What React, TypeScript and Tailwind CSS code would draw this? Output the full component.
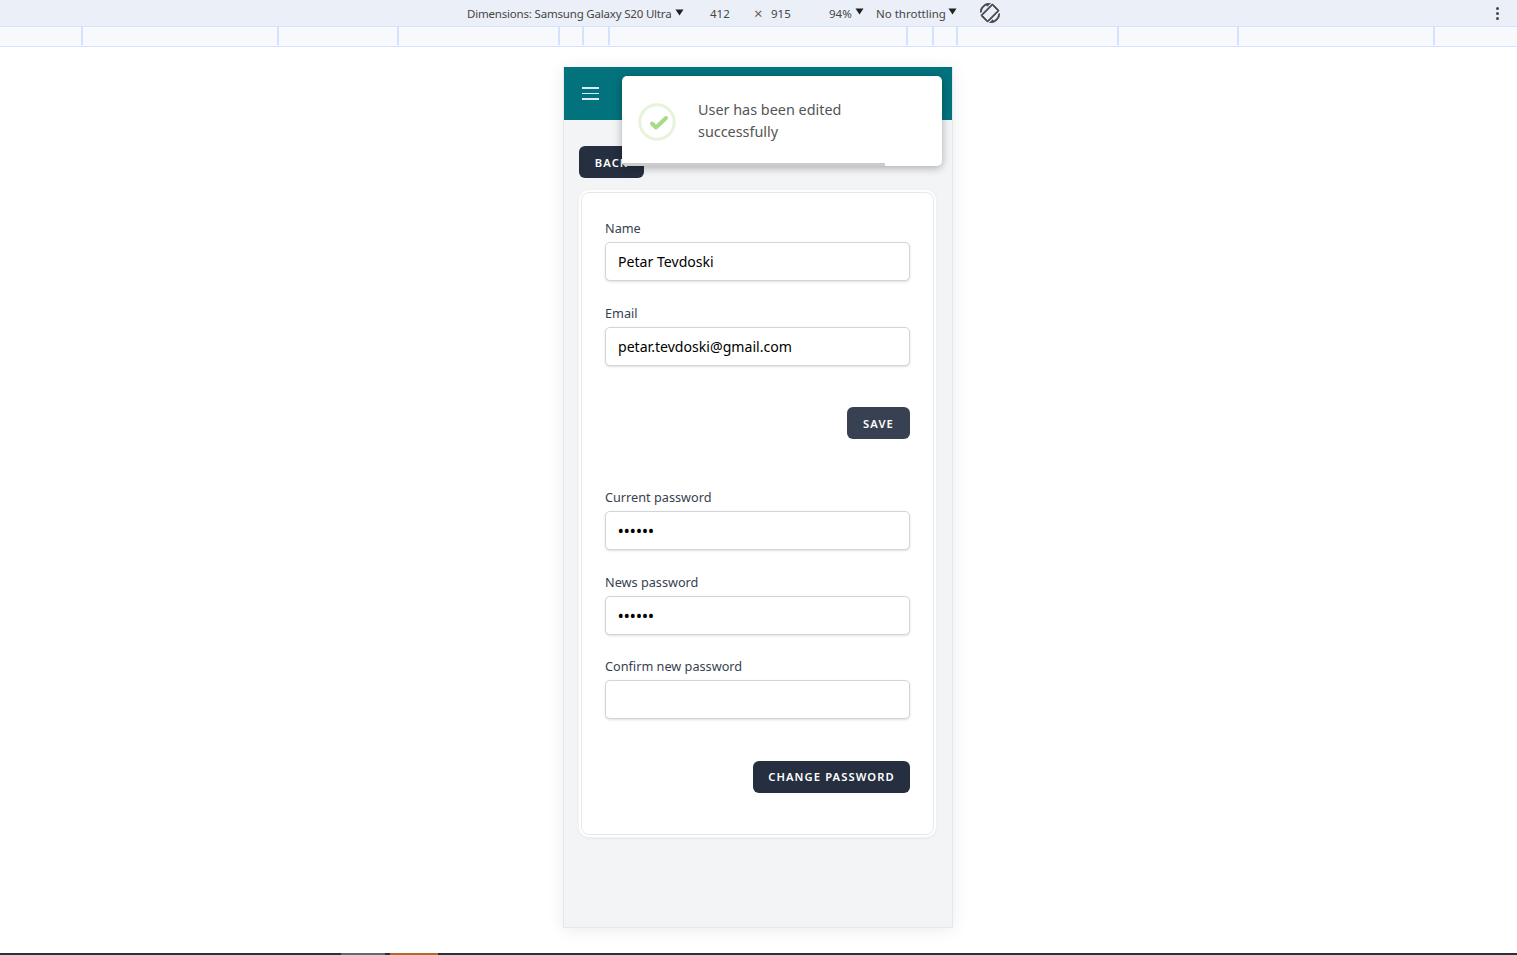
const ticks = [81, 277, 397, 558, 582, 608, 906, 932, 956, 1117, 1237, 1433];

function Field({ label, value, mono, labelClass }: { label: string; value?: string; mono?: boolean; labelClass: string }) {
  return (
    <div className={labelClass}>
      <div className="text-[12.7px] leading-[20px] text-[#374151] font-['Noto_Sans',sans-serif]">{label}</div>
      <div className="mt-[4px] h-[39px] rounded-[5px] border border-[#d1d5db] bg-white shadow-sm flex items-center px-[12px] text-[14.1px] text-black font-['Noto_Sans',sans-serif]">
        {mono ? <span className="tracking-[0.6px] text-[14.5px] font-semibold">••••••</span> : value}
      </div>
    </div>
  );
}

function Btn({ children, light, className = "" }: { children: string; light?: boolean; className?: string }) {
  return (
    <div className={`h-[32px] rounded-[6px] flex items-center justify-center text-white text-[11.2px] font-semibold tracking-[1.1px] font-['Noto_Sans',sans-serif] ${light ? "bg-[#374151]" : "bg-[#252f3f]"} ${className}`}>
      {children}
    </div>
  );
}

function Caret() {
  return (
    <svg width="9" height="7" viewBox="0 0 9 7" className="inline-block shrink-0 mb-[3px]">
      <path d="M0.5 0.5h8L4.5 6.5z" fill="#202124" />
    </svg>
  );
}

export default function App() {
  return (
    <div className="h-[955px] w-[1517px] overflow-hidden bg-white flex flex-col font-['Noto_Sans',sans-serif]">
      <div className="h-[27px] shrink-0 bg-[#ebeff7] border-b border-[#d3e3fd] flex items-center text-[11.5px] text-[#444746]">
        <div className="ml-[467px] w-[217px] flex items-center gap-[4px] whitespace-nowrap pt-[1px]">
          <span className="tracking-[-0.19px]">Dimensions: Samsung Galaxy S20 Ultra</span>
          <Caret />
        </div>
        <span className="ml-[26px] w-[44px] pt-[1px]">412</span>
        <span className="w-[17px] text-[#6b5f5a] text-[15px] pt-[1px]">×</span>
        <span className="w-[58px] pt-[1px]">915</span>
        <span className="w-[26px] pt-[1px]">94%</span>
        <Caret />
        <span className="ml-[12px] w-[72px] pt-[1px] whitespace-nowrap">No throttling</span>
        <Caret />
        <svg className="ml-[23px]" width="20" height="20" viewBox="0 0 24 24" fill="#444746" stroke="#444746" strokeWidth="0.9">
          <path d="M16.48 2.52c3.27 1.55 5.61 4.72 5.97 8.48h1.5C23.44 4.84 18.29 0 12 0l-.66.03 3.81 3.81 1.33-1.32zm-6.25-.77c-.59-.59-1.54-.59-2.12 0L1.75 8.11c-.59.59-.59 1.54 0 2.12l12.02 12.02c.59.59 1.54.59 2.12 0l6.36-6.36c.59-.59.59-1.54 0-2.12L10.23 1.75zm4.6 19.44L2.81 9.17l6.36-6.36 12.02 12.02-6.36 6.36zm-7.31.29C4.25 19.94 1.91 16.76 1.55 13H.05C.56 19.16 5.71 24 12 24l.66-.03-3.81-3.81-1.33 1.32z" transform="matrix(-1 0 0 1 24 0)" />
        </svg>
        <div className="ml-auto mr-[18px] flex flex-col gap-[2px]">
          <span className="w-[3px] h-[3px] rounded-full bg-[#444746]" />
          <span className="w-[3px] h-[3px] rounded-full bg-[#444746]" />
          <span className="w-[3px] h-[3px] rounded-full bg-[#444746]" />
        </div>
      </div>
      <div className="h-[20px] shrink-0 bg-[#f7f9fd] border-b border-[#d3e3fd] flex">
        {ticks.map((x, i) => (
          <div key={x} className="h-[18px] w-[2px] bg-[#d3e3fd]" style={{ marginLeft: i === 0 ? x : x - ticks[i - 1] - 2 }} />
        ))}
      </div>
      <div className="flex-1 min-h-0 flex flex-col">
        <div className="flex-1 min-h-0 flex justify-center pt-[20px]">
          <div className="relative h-[861px] w-[390px] -ml-[1px] bg-[#f3f4f6] border border-[#e5e7eb] border-t-0 shadow-[0_2px_16px_rgba(0,0,0,0.08)]">
            <div className="h-[53px] bg-[#02737d] flex items-center pl-[18px]">
              <div className="flex flex-col gap-[4px]">
                <span className="h-[1.5px] w-[17px] bg-[#dbeafe]" />
                <span className="h-[1.5px] w-[17px] bg-[#dbeafe]" />
                <span className="h-[1.5px] w-[17px] bg-[#dbeafe]" />
              </div>
            </div>
            <div className="px-[15px] pt-[26px]">
              <Btn className="w-[65px] pt-[2px]">BACK</Btn>
              <div className="mt-[12px] w-[357px] h-[647px] rounded-[10px] border-[2px] border-white bg-white p-[24px] shadow-[inset_0_0_0_1px_#e5e7eb,0_0_0_1px_#f0f1f3,0_1px_3px_rgba(0,0,0,0.1)]">
                <Field label="Name" value="Petar Tevdoski" labelClass="pt-[2px]" />
                <Field label="Email" value="petar.tevdoski@gmail.com" labelClass="mt-[22px]" />
                <div className="mt-[41px] flex justify-end">
                  <Btn light className="w-[63px] pt-[2px]">SAVE</Btn>
                </div>
                <Field label="Current password" mono labelClass="mt-[48px]" />
                <Field label="News password" mono labelClass="mt-[22px]" />
                <Field label="Confirm new password" labelClass="mt-[21px]" />
                <div className="mt-[42px] flex justify-end">
                  <Btn className="w-[157px] pt-[1px]">CHANGE PASSWORD</Btn>
                </div>
              </div>
            </div>
            <div className="absolute left-[58px] top-[9px] w-[320px] h-[90px] bg-white rounded-[5px] shadow-[0_2px_8px_rgba(0,0,0,0.3)] overflow-hidden">
              <div className="flex items-start pl-[16px]">
                <svg width="38" height="38" viewBox="0 0 38 38" fill="none" className="shrink-0 mt-[27px]">
                  <circle cx="19" cy="19" r="17.2" stroke="#e6f4dc" strokeWidth="3" />
                  <path d="M14 20.5l4 4 10-9.5" stroke="#a5dc86" strokeWidth="4" strokeLinecap="round" strokeLinejoin="round" />
                </svg>
                <div className="ml-[22px] mt-[23px] w-[180px] text-[14.4px] leading-[22px] text-[#545454]">User has been edited successfully</div>
              </div>
              <div className="absolute left-0 bottom-0 h-[3px] w-[263px] bg-[#cccccc]" />
            </div>
          </div>
        </div>
        <div className="h-[2px] shrink-0 bg-[#263238] flex">
          <div className="ml-[341px] w-[44px] bg-[#5f6b73]" />
          <div className="ml-[5px] w-[48px] bg-[#b06a2c]" />
        </div>
      </div>
    </div>
  );
}
